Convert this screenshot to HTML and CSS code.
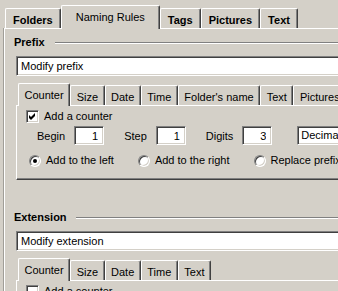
FILE: index.html
```html
<!DOCTYPE html>
<html lang="en">
<head>
    <meta charset="UTF-8">
    <title>Naming Rules</title>
    <link rel="stylesheet" href="styles.css">
</head>
<body>
    <div class="window">
        <div class="tabs main-tabs">
            <span class="tab">Folders</span>
            <span class="tab active">Naming Rules</span>
            <span class="tab">Tags</span>
            <span class="tab">Pictures</span>
            <span class="tab">Text</span>
        </div>

        <div class="panel main-panel">
            <!-- Prefix -->
            <div class="group">
                <div class="group-title"><span>Prefix</span></div>
                <input class="edit" type="text" value="Modify prefix">

                <div class="tabs sub-tabs">
                    <span class="tab active">Counter</span>
                    <span class="tab">Size</span>
                    <span class="tab">Date</span>
                    <span class="tab">Time</span>
                    <span class="tab">Folder's name</span>
                    <span class="tab">Text</span>
                    <span class="tab">Pictures</span>
                </div>
                <div class="panel sub-panel">
                    <label class="check-row">
                        <span class="check">
                            <svg width="9" height="9" viewBox="0 0 9 9"><path d="M1 3 L3 5 L7 1 L7 4 L3 8 L1 6 Z" fill="#000"/></svg>
                        </span>
                        Add a counter
                    </label>
                    <div class="field-row">
                        <span class="field"><span>Begin</span><input class="edit num" type="text" value="1"></span>
                        <span class="field"><span>Step</span><input class="edit num" type="text" value="1"></span>
                        <span class="field"><span>Digits</span><input class="edit num" type="text" value="3"></span>
                        <div class="edit combo">Decimal</div>
                    </div>
                    <div class="radio-row">
                        <span class="option"><span class="radio on"></span>Add to the left</span>
                        <span class="option"><span class="radio"></span>Add to the right</span>
                        <span class="option"><span class="radio"></span>Replace prefix</span>
                    </div>
                </div>
            </div>

            <!-- Extension -->
            <div class="group ext">
                <div class="group-title"><span>Extension</span></div>
                <input class="edit" type="text" value="Modify extension">

                <div class="tabs sub-tabs">
                    <span class="tab active">Counter</span>
                    <span class="tab">Size</span>
                    <span class="tab">Date</span>
                    <span class="tab">Time</span>
                    <span class="tab">Text</span>
                </div>
                <div class="panel sub-panel">
                    <label class="check-row">
                        <span class="check"></span>
                        Add a counter
                    </label>
                </div>
            </div>
        </div>
    </div>
</body>
</html>
```

FILE: styles.css
```css
body {
    margin: 0;
    overflow: hidden;
    background-color: #d4d0c8;
    font-family: "Liberation Sans", Arial, sans-serif;
    font-size: 11px;
    color: #000;
}
.window {
    width: 420px;
    height: 291px;
}

/* tabs */
.tabs {
    display: flex;
    align-items: flex-end;
}
.tab {
    box-sizing: border-box;
    height: 20px;
    padding: 3px 5.5px 0;
    line-height: 16px;
    white-space: nowrap;
    border-left: 1px solid #fff;
    border-top: 1px solid #fff;
    border-right: 1px solid #404040;
    border-radius: 2px 2px 0 0;
    box-shadow: inset -1px 0 #808080;
    background-color: #d4d0c8;
}
.tab.active {
    position: relative;
    z-index: 1;
    margin-bottom: -1px;
}
.main-tabs {
    margin: 5px 0 0 4px;
    padding-left: 1px;
}
.main-tabs .tab {
    font-weight: bold;
    padding: 3px 7px 0;
}
.main-tabs .tab.active {
    font-weight: normal;
    height: 24px;
    padding: 3px 14px 0;
}
.sub-tabs {
    margin-top: 7px;
    padding-left: 2px;
}
.sub-tabs .tab.active {
    height: 23px;
}

/* panels */
.panel {
    border-top: 1px solid #fff;
    border-left: 1px solid #fff;
}
.main-panel {
    margin-left: 4px;
    height: 270px;
    box-shadow: -1px 0 #a09e98;
}
.sub-panel {
    border-bottom: 1px solid #404040;
    box-shadow: inset 0 -1px #808080;
    padding: 4px 0 12px 0;
}
.ext .sub-panel {
    border-bottom: none;
    box-shadow: none;
}

/* group header */
.group {
    padding-left: 11px;
}
.group.ext {
    margin-top: 31px;
}
.group-title {
    display: flex;
    align-items: center;
    margin: 7px 0 0 -2px;
    line-height: 13px;
    font-weight: bold;
}
.group-title span {
    padding-right: 10px;
}
.group-title::after {
    content: "";
    flex: 1;
    border-top: 1px solid #808080;
    border-bottom: 1px solid #fff;
}
.ext .group-title span {
    padding-right: 9px;
}

/* edits */
.edit {
    display: block;
    box-sizing: border-box;
    width: 400px;
    height: 20px;
    margin: 7px 0 0;
    padding: 0 4px;
    font: inherit;
    color: #000;
    background-color: #fff;
    border: 1px solid;
    border-color: #808080 #fff #fff #808080;
    box-shadow: inset 1px 1px #404040, inset -1px -1px #d4d0c8;
    outline: none;
}
.edit.num {
    width: 30px;
    height: 19px;
    margin: 0;
    text-align: right;
    padding-right: 5px;
}
.edit.combo {
    width: 90px;
    height: 19px;
    margin: 0 0 0 25px;
    line-height: 17px;
    padding-left: 3px;
}

/* checkbox */
.check-row {
    display: flex;
    align-items: center;
    gap: 5px;
    padding-left: 9px;
    line-height: 13px;
}
.check {
    box-sizing: border-box;
    width: 13px;
    height: 13px;
    padding: 1px;
    background-color: #fff;
    border: 1px solid;
    border-color: #808080 #fff #fff #808080;
    box-shadow: inset 1px 1px #404040, inset -1px -1px #d4d0c8;
}
.check svg {
    display: block;
}

/* counter fields */
.field-row {
    display: flex;
    align-items: center;
    margin-top: 3px;
    padding-left: 20px;
}
.field {
    display: flex;
    align-items: center;
    gap: 9px;
}
.field + .field {
    margin-left: 20px;
}

/* radios */
.radio-row {
    display: flex;
    gap: 24px;
    margin-top: 9px;
    padding-left: 12px;
    line-height: 13px;
    white-space: nowrap;
}
.option {
    display: flex;
    align-items: center;
    gap: 5px;
}
.radio {
    box-sizing: border-box;
    position: relative;
    width: 12px;
    height: 12px;
    border-radius: 50%;
    background-color: #fff;
    border: 1px solid;
    border-color: #808080 #fff #fff #808080;
    box-shadow: inset 1px 1px #404040, inset -1px -1px #d4d0c8;
}
.radio.on::after {
    content: "";
    position: absolute;
    left: 3px;
    top: 3px;
    width: 4px;
    height: 4px;
    border-radius: 50%;
    background-color: #000;
}
```
